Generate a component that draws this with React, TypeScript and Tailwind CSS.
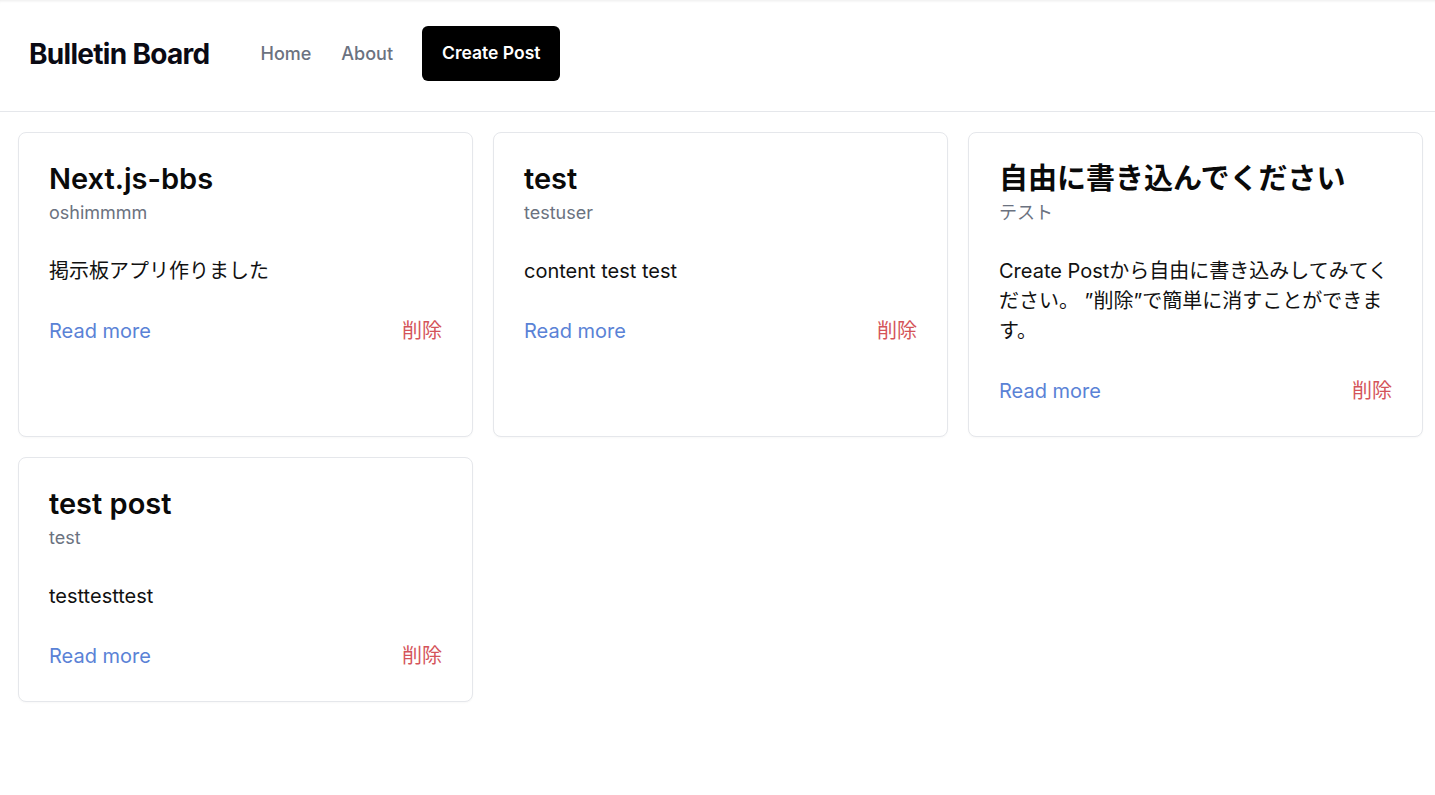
import React from "react";

type Post = { title: string; author: string; content: string };

const posts: Post[] = [
  { title: "Next.js-bbs", author: "oshimmmm", content: "掲示板アプリ作りました" },
  { title: "test", author: "testuser", content: "content test test" },
  {
    title: "自由に書き込んでください",
    author: "テスト",
    content: "Create Postから自由に書き込みしてみてください。 ”削除”で簡単に消すことができます。",
  },
  { title: "test post", author: "test", content: "testtesttest" },
];

function Card({ post }: { post: Post }) {
  return (
    <div className="rounded-lg border border-[#e5e7eb] bg-white px-[30px] pt-[31px] pb-[31px] shadow-[0_1px_2px_rgba(0,0,0,0.03)]">
      <h2 className="text-[29px] font-semibold leading-[30px] text-[#0a0a0a]">{post.title}</h2>
      <p className="mt-[5px] text-[18px] leading-[28px] text-[#6b7280]">{post.author}</p>
      <p className="mt-[29px] text-[20px] leading-[30px] text-[#111111]">{post.content}</p>
      <div className="mt-[31px] flex items-center justify-between">
        <a className="text-[20px] leading-[28px] text-[#5a82d6]">Read more</a>
        <button className="text-[20px] leading-[28px] text-[#d4545a]">削除</button>
      </div>
    </div>
  );
}

export default function App() {
  return (
    <div
      className="min-h-screen bg-white"
      style={{ fontFamily: 'Inter, "Noto Sans CJK JP", sans-serif' }}
    >
      <header className="flex h-[112px] items-center border-b border-[#e5e7eb] pb-[4px] pl-[29px] shadow-[inset_0_3px_3px_-2px_rgba(0,0,0,0.08)]">
        <h1 className="text-[28px] font-bold tracking-tight text-[#0a0a14]">Bulletin Board</h1>
        <nav className="ml-[51px] flex items-center gap-[30px] text-[18px] font-medium text-[#6b7280]">
          <a>Home</a>
          <a>About</a>
        </nav>
        <button className="ml-[29px] h-[55px] rounded-md bg-black px-5 text-[17.5px] font-semibold text-white">
          Create Post
        </button>
      </header>
      <main className="grid grid-cols-[455px_455px_455px] items-stretch gap-x-5 gap-y-[20px] pl-[18px] pt-[20px]">
        {posts.map((p, i) => (
          <Card key={i} post={p} />
        ))}
      </main>
    </div>
  );
}
